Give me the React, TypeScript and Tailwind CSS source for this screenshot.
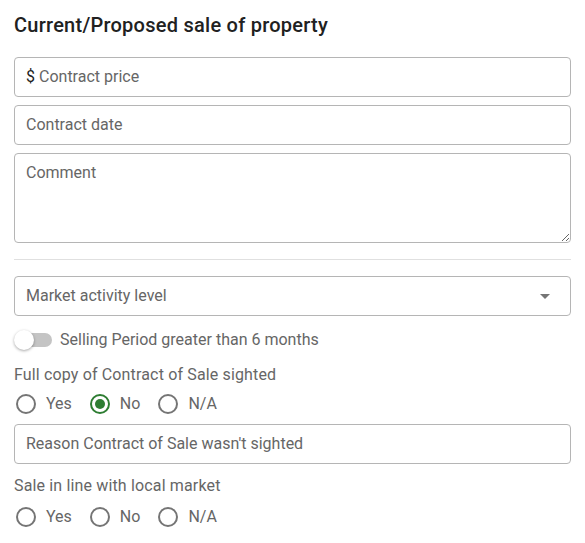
import React from "react";

function Radio({ checked }: { checked?: boolean }) {
  return (
    <svg width="24" height="24" viewBox="0 0 24 24" className="shrink-0">
      <circle cx="12" cy="12" r="9" fill="none" stroke={checked ? "#2e7d32" : "#757575"} strokeWidth="2" />
      {checked && <circle cx="12" cy="12" r="5" fill="#2e7d32" />}
    </svg>
  );
}

function RadioGroup({ value }: { value?: string }) {
  const opts = ["Yes", "No", "N/A"];
  return (
    <div className="flex items-center h-[24px] gap-[16px]">
      {opts.map((o) => (
        <div key={o} className="flex items-center gap-[8px]">
          <Radio checked={value === o} />
          <span className="text-[16px] text-[#666666]">{o}</span>
        </div>
      ))}
    </div>
  );
}

function Field({ text, className = "" }: { text: string; className?: string }) {
  return (
    <div className={`h-[40px] border border-[#b5b5b5] rounded-[4px] flex items-center px-[11px] text-[16px] text-[#666666] ${className}`}>
      {text}
    </div>
  );
}

export default function App() {
  return (
    <div className="w-[585px] h-[543px] bg-white px-[14px] pt-[12px]" style={{ fontFamily: "Roboto, 'Noto Sans', sans-serif" }}>
      <h1 className="text-[20px] leading-[26px] font-medium tracking-[0.25px] text-[#212121]">Current/Proposed sale of property</h1>
      <div className="mt-[19px] flex flex-col gap-[8px]">
        <div className="h-[40px] border border-[#b5b5b5] rounded-[4px] flex items-center px-[11px] text-[16px] text-[#666666]">
          <span className="text-[#212121] mr-[4px]">$</span>Contract price
        </div>
        <Field text="Contract date" />
        <textarea
          placeholder="Comment"
          className="h-[90px] border border-[#b5b5b5] rounded-[4px] px-[11px] py-[8px] text-[16px] leading-[22px] text-[#666666] placeholder:text-[#666666] outline-none block w-full"
          style={{ resize: "vertical" }}
        />
      </div>
      <div className="mt-[16px] h-px bg-[#e0e0e0]" />
      <div className="mt-[16px] h-[40px] border border-[#b5b5b5] rounded-[4px] flex items-center justify-between pl-[11px] pr-[20px] text-[16px] text-[#666666]">
        <span>Market activity level</span>
        <svg width="10" height="5" viewBox="0 0 10 5">
          <path d="M0 0 L10 0 L5 5 Z" fill="#757575" />
        </svg>
      </div>
      <div className="mt-[13px] h-[22px] flex items-center">
        <div className="relative w-[38px] h-[20px] flex items-center shrink-0">
          <div className="absolute left-[4px] right-0 h-[14px] rounded-full bg-[#c4c4c4]" />
          <div className="absolute left-0 w-[20px] h-[20px] rounded-full bg-white shadow-[0_1px_3px_rgba(0,0,0,0.35)]" />
        </div>
        <span className="ml-[8px] text-[16px] text-[#666666]">Selling Period greater than 6 months</span>
      </div>
      <div className="mt-[12px] text-[16px] leading-[24px] tracking-[0.15px] text-[#666666]">Full copy of Contract of Sale sighted</div>
      <div className="mt-[5px]">
        <RadioGroup value="No" />
      </div>
      <Field text="Reason Contract of Sale wasn't sighted" className="mt-[8px]" />
      <div className="mt-[10px] text-[16px] leading-[24px] tracking-[0.15px] text-[#666666]">Sale in line with local market</div>
      <div className="mt-[7px]">
        <RadioGroup />
      </div>
    </div>
  );
}
